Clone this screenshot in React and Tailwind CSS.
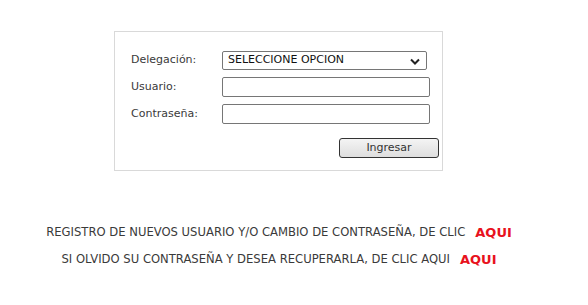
import React from 'react';

const font = { fontFamily: '"DejaVu Sans", Verdana, sans-serif' };

const App = () => {
  return (
    <div className="w-[558px] min-h-[305px] bg-white pt-[31px]" style={font}>
      <div className="ml-[114px] w-[329px] h-[140px] border border-[#d9d9d9] pt-[19px] pl-[16px] pr-[12px]">
        <div className="grid grid-cols-[91px_1fr] gap-y-[7px] items-center text-[11px] text-[#3a3a3a]">
          <label>Delegación:</label>
          <div className="relative w-[205px] h-[19px] border border-[#767676] rounded-[2px] flex items-center pl-[5px] text-[#111]">
            SELECCIONE OPCION
            <svg className="absolute right-[6px] top-[6px]" width="10" height="7" viewBox="0 0 10 7">
              <path d="M1 1.5 L5 5.5 L9 1.5" fill="none" stroke="#222" strokeWidth="2" />
            </svg>
          </div>
          <label>Usuario:</label>
          <input type="text" className="w-[208px] h-[20px] border border-[#767676] rounded-[2px] outline-none" />
          <label>Contraseña:</label>
          <input type="password" className="w-[208px] h-[20px] border border-[#767676] rounded-[2px] outline-none" />
        </div>
        <div className="flex justify-end mt-[14px]">
          <button className="w-[100px] h-[20px] border border-[#333] rounded-[3px] bg-gradient-to-b from-[#f4f4f4] to-[#dedede] text-[11px] text-[#333] mr-[-9px]">
            Ingresar
          </button>
        </div>
      </div>

      <div className="mt-[52px] flex flex-col items-center text-[11.6px] text-[#3a3a3a] gap-[7px]">
        <p className="flex items-center">
          REGISTRO DE NUEVOS USUARIO Y/O CAMBIO DE CONTRASEÑA, DE CLIC
          <a className="ml-[10px] text-[13px] font-bold text-[#e8121d]">AQUI</a>
        </p>
        <p className="flex items-center">
          SI OLVIDO SU CONTRASEÑA Y DESEA RECUPERARLA, DE CLIC AQUI
          <a className="ml-[10px] text-[13px] font-bold text-[#e8121d]">AQUI</a>
        </p>
      </div>
    </div>
  );
};

export default App;
